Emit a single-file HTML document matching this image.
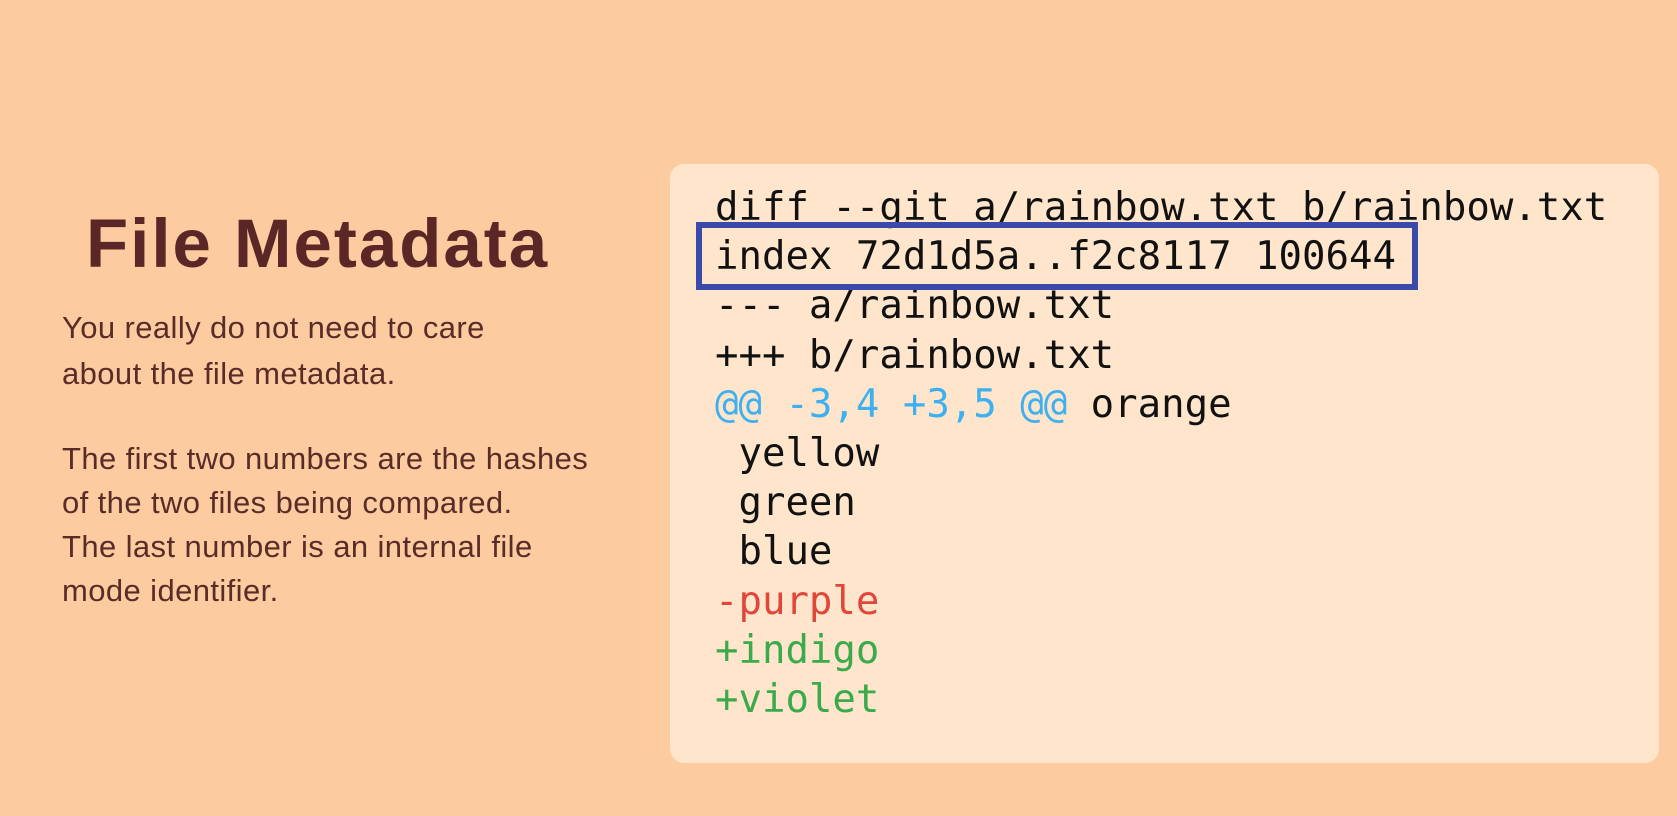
<!DOCTYPE html>
<html><head><meta charset="utf-8"><style>
html,body{margin:0;padding:0}
body{width:1677px;height:816px;background:#fccca0;position:relative;overflow:hidden;font-family:"Liberation Sans",sans-serif}
h1{position:absolute;left:86px;top:209px;margin:0;font-size:69px;font-weight:bold;color:#5a2626;letter-spacing:2px;line-height:1}
.p{position:absolute;left:62px;color:#5a2c28;font-size:31px;line-height:46px;letter-spacing:0.4px}
.panel{position:absolute;left:670px;top:164px;width:989px;height:599px;background:#fee5cc;border-radius:14px}
.code{position:absolute;left:715px;top:183px;font-family:"DejaVu Sans Mono",monospace;font-size:39px;line-height:49.2px;white-space:pre;color:#111}
.box{position:absolute;left:696px;top:222px;width:710px;height:56px;border:6px solid #3a4aa8}
.b{color:#3eb0f0}.r{color:#e0463a}.g{color:#3aaa4a}
</style></head><body>
<h1>File Metadata</h1>
<div class="p" style="top:305px">You really do not need to care<br>about the file metadata.</div>
<div class="p" style="top:437px;line-height:44px">The first two numbers are the hashes<br>of the two files being compared.<br>The last number is an internal file<br>mode identifier.</div>
<div class="panel"></div>
<div class="code">diff --git a/rainbow.txt b/rainbow.txt
index 72d1d5a..f2c8117 100644
--- a/rainbow.txt
+++ b/rainbow.txt
<span class="b">@@ -3,4 +3,5 @@</span> orange
 yellow
 green
 blue
<span class="r">-purple</span>
<span class="g">+indigo</span>
<span class="g">+violet</span></div>
<div class="box"></div>
</body></html>
